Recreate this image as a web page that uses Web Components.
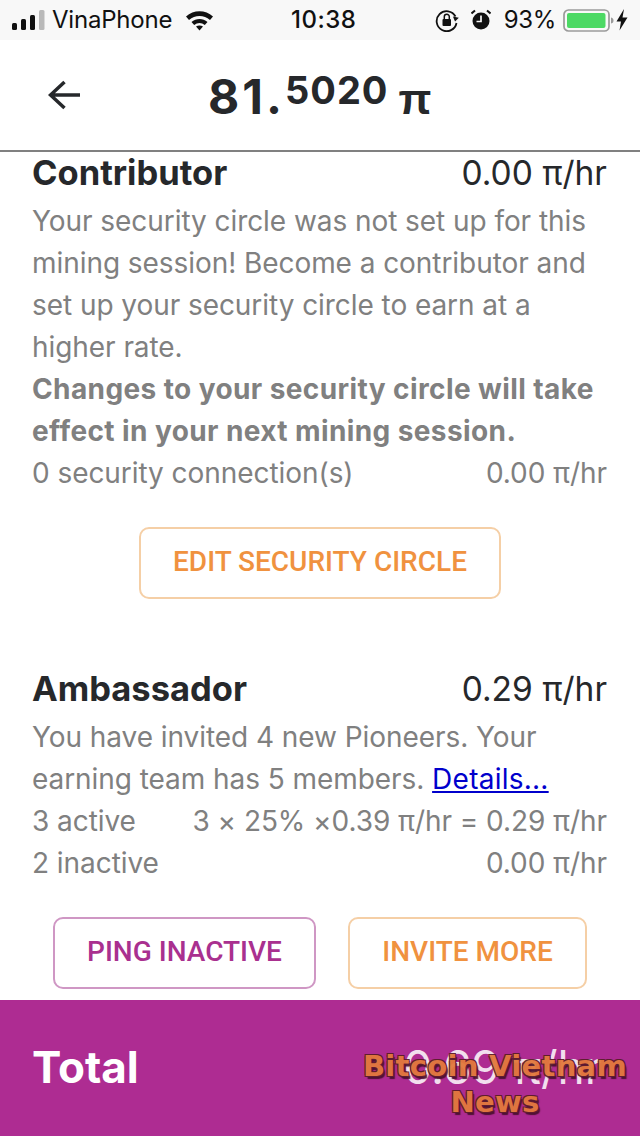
<!DOCTYPE html>
<html>
<head>
<meta charset="utf-8">
<style>
  html, body { margin: 0; padding: 0; background: #fff; }
  body { width: 640px; height: 1136px; overflow: hidden; font-family: Inter, Roboto, sans-serif; display: flex; flex-direction: column; position: relative; }
</style>
</head>
<body>
<status-bar></status-bar>
<balance-header></balance-header>
<main-scroll>
  <earning-section title="Contributor" rate="0.00 π/hr">
    <text-line>Your security circle was not set up for this</text-line>
    <text-line>mining session! Become a contributor and</text-line>
    <text-line>set up your security circle to earn at a</text-line>
    <text-line>higher rate.</text-line>
    <text-line bold>Changes to your security circle will take</text-line>
    <text-line bold>effect in your next mining session.</text-line>
    <text-line right="0.00 π/hr">0 security connection(s)</text-line>
    <button-row slot="actions">
      <action-button color="orange" width="362">EDIT SECURITY CIRCLE</action-button>
    </button-row>
  </earning-section>
  <earning-section title="Ambassador" rate="0.29 π/hr">
    <text-line>You have invited 4 new Pioneers. Your</text-line>
    <text-line>earning team has 5 members. <a href="#" style="color:#0000cc;letter-spacing:.25px">Details...</a></text-line>
    <text-line right="3 × 25% ×0.39 π/hr = 0.29 π/hr">3 active</text-line>
    <text-line right="0.00 π/hr">2 inactive</text-line>
    <button-row slot="actions">
      <action-button color="purple" width="263">PING INACTIVE</action-button>
      <action-button color="orange" width="239">INVITE MORE</action-button>
    </button-row>
  </earning-section>
</main-scroll>
<total-bar></total-bar>
<water-mark></water-mark>

<script>
  // barra de status do telefone
  class StatusBar extends HTMLElement {
    constructor() {
      super();
      this.attachShadow({ mode: 'open' });
      this.shadowRoot.innerHTML = `
        <style>
          :host { display: flex; flex: none; height: 40px; background: #f8f8f8; align-items: center; color: #111; font: 400 24px/40px Inter, Roboto, sans-serif; position: relative; }
          .left { display: flex; align-items: center; padding-left: 12px; }
          .name { margin-left: 7px; font-size: 24px; letter-spacing: -0.2px; }
          .wifi { margin-left: 13px; }
          .time { position: absolute; left: 291px; top: 0; font-weight: 500; font-size: 24px; letter-spacing: 0.5px; }
          .right { margin-left: auto; display: flex; align-items: center; padding-right: 12px; }
          .pct { font-size: 24px; margin: 0 7px 0 13px; letter-spacing: -0.3px; }
          svg { display: block; }
        </style>
        <div class="left">
          <svg width="33" height="22" viewBox="0 0 33 22">
            <rect x="0" y="14" width="5" height="7" rx="1.500" fill="#111"/>
            <rect x="9" y="10" width="5" height="11" rx="1.500" fill="#111"/>
            <rect x="18" y="6" width="5" height="15" rx="1.500" fill="#111"/>
            <rect x="27" y="1" width="5.500" height="20" rx="1.500" fill="#b9b9b9"/>
          </svg>
          <span class="name">VinaPhone</span>
          <svg class="wifi" width="29" height="22" viewBox="0 0 29 22">
            <path d="M1 7.500C8.500 0.500 20.500 0.500 28 7.500L25 11C19 5.500 10 5.500 4 11Z" fill="#111"/>
            <path d="M6.500 13C11 9 18 9 22.500 13L19.800 16C16.500 13.300 12.500 13.300 9.200 16Z" fill="#111"/>
            <path d="M11 17.500C13 16 16 16 18 17.500L14.500 21.500Z" fill="#111"/>
          </svg>
        </div>
        <span class="time">10:38</span>
        <div class="right">
          <svg width="24" height="24" viewBox="0 0 24 24" style="margin-right:12px">
            <path d="M20.500 8.500A10 10 0 1 0 21.500 15" fill="none" stroke="#111" stroke-width="1.800"/>
            <path d="M17.500 9L23.500 9L20.500 13.500Z" fill="#111" transform="rotate(10 20 11)"/>
            <rect x="7.500" y="11" width="8.500" height="7" rx="1" fill="#111"/>
            <path d="M9.300 11V8.800a2.500 2.500 0 0 1 5 0V11" fill="none" stroke="#111" stroke-width="1.500"/>
          </svg>
          <svg width="20" height="22" viewBox="0 0 20 22">
            <circle cx="10" cy="12" r="8.500" fill="#111"/>
            <path d="M10 6.500V12.500H5.500" fill="none" stroke="#f8f8f8" stroke-width="1.700"/>
            <path d="M0.500 4.500L4 1.500M19.500 4.500L16 1.500" stroke="#111" stroke-width="2"/>
          </svg>
          <span class="pct">93%</span>
          <svg width="52" height="24" viewBox="0 0 52 24">
            <rect x="1" y="2" width="45" height="21" rx="4.500" fill="none" stroke="#9a9a9a" stroke-width="1.700"/>
            <rect x="4" y="5" width="38.500" height="15" rx="2" fill="#4cd964"/>
            <path d="M48 9.500C50 10 50.500 11 50.500 12.500C50.500 14 50 15 48 15.500Z" fill="#9a9a9a"/>
          </svg>
          <svg width="12" height="22" viewBox="0 0 12 22" style="margin-left:1px">
            <path d="M8 0L0.500 12.500H5L3.500 21.500L11.500 8.500H6.500Z" fill="#111"/>
          </svg>
        </div>`;
    }
  }
  customElements.define('status-bar', StatusBar);

  // cabecalho com o saldo
  class BalanceHeader extends HTMLElement {
    constructor() {
      super();
      this.attachShadow({ mode: 'open' });
      this.shadowRoot.innerHTML = `
        <style>
          :host { display: flex; flex: none; height: 110px; border-bottom: 2px solid #808080; background: #fff; align-items: center; color: #26282b; }
          .back { margin-left: 48px; width: 33px; display: flex; }
          .title { margin-left: 127px; padding-top: 3px; font: 700 48px/1 Inter, sans-serif; display: flex; align-items: baseline; white-space: nowrap; letter-spacing: 3px; }
          .sup { font-size: 38px; position: relative; top: -10px; letter-spacing: 1px; }
          .pi { font: 700 43px/1 "Liberation Sans", sans-serif; margin-left: 10px; }
        </style>
        <div class="back">
          <svg width="33" height="30" viewBox="0 0 33 30"><path d="M16.500 2L2.500 15L16.500 28M3 15H32" fill="none" stroke="#26282b" stroke-width="3.500"/></svg>
        </div>
        <div class="title"><span>81.</span><span class="sup">5020</span><span class="pi">π</span></div>`;
    }
  }
  customElements.define('balance-header', BalanceHeader);

  // area de rolagem, corta o que passa da altura
  class MainScroll extends HTMLElement {
    constructor() {
      super();
      this.attachShadow({ mode: 'open' });
      this.shadowRoot.innerHTML = `
        <style>
          :host { display: flex; flex-direction: column; height: 848px; flex: none; overflow: hidden; gap: 69px; }
        </style>
        <slot></slot>`;
    }
  }
  customElements.define('main-scroll', MainScroll);

  class EarningSection extends HTMLElement {
    constructor() {
      super();
      this.attachShadow({ mode: 'open' });
      const title = this.getAttribute('title');
      const rate = this.getAttribute('rate');
      this.shadowRoot.innerHTML = `
        <style>
          :host { display: block; padding: 0 33px 0 32px; }
          .head { display: flex; justify-content: space-between; height: 42px; line-height: 42px; margin-bottom: 6px; color: #26282b; }
          .title { font-size: 34.5px; font-weight: 700; }
          .rate { font-size: 33.5px; }
          .actions { margin-top: 33px; }
        </style>
        <div class="head"><span class="title">${title}</span><span class="rate">${rate}</span></div>
        <slot></slot>
        <div class="actions"><slot name="actions"></slot></div>`;
    }
  }
  customElements.define('earning-section', EarningSection);

  class TextLine extends HTMLElement {
    constructor() {
      super();
      this.attachShadow({ mode: 'open' });
      const right = this.getAttribute('right');
      this.shadowRoot.innerHTML = `
        <style>
          :host { display: flex; justify-content: space-between; height: 42px; font-size: 28px; line-height: 42px; color: #808080; white-space: nowrap; letter-spacing: -0.06px; }
          :host([bold]) { font-weight: 700; letter-spacing: 0.4px; }
        </style>
        <span><slot></slot></span>${right ? `<span>${right}</span>` : ''}`;
    }
  }
  customElements.define('text-line', TextLine);

  class ButtonRow extends HTMLElement {
    constructor() {
      super();
      this.attachShadow({ mode: 'open' });
      this.shadowRoot.innerHTML = `
        <style>
          :host { display: flex; justify-content: center; gap: 32px; padding-left: 1px; }
        </style>
        <slot></slot>`;
    }
  }
  customElements.define('button-row', ButtonRow);

  class ActionButton extends HTMLElement {
    constructor() {
      super();
      this.attachShadow({ mode: 'open' });
      const purple = this.getAttribute('color') === 'purple';
      const main = purple ? '#a9308f' : '#f0923f';
      const edge = purple ? '#cf97c4' : '#f5cfa6';
      this.shadowRoot.innerHTML = `
        <style>
          :host { display: flex; box-sizing: border-box; width: ${this.getAttribute('width')}px; height: 72px; padding-bottom: 4px; border: 2px solid ${edge}; border-radius: 10px; align-items: center; justify-content: center; color: ${main}; font: 500 28px Roboto, sans-serif; background: #fff; white-space: nowrap; }
        </style>
        <slot></slot>`;
    }
  }
  customElements.define('action-button', ActionButton);

  class TotalBar extends HTMLElement {
    constructor() {
      super();
      this.attachShadow({ mode: 'open' });
      this.shadowRoot.innerHTML = `
        <style>
          :host { display: flex; flex: none; height: 136px; background: #ae2c92; color: #fff; align-items: center; justify-content: space-between; padding: 0 38px 3px 32px; box-sizing: border-box; }
          .t { font-size: 44px; font-weight: 700; }
          .v { font-size: 46px; opacity: .85; }
        </style>
        <span class="t">Total</span><span class="v">0.69 π/hr</span>`;
    }
  }
  customElements.define('total-bar', TotalBar);

  // marca d'agua por cima da barra
  class WaterMark extends HTMLElement {
    constructor() {
      super();
      this.attachShadow({ mode: 'open' });
      this.shadowRoot.innerHTML = `
        <style>
          :host { display: block; position: absolute; left: 362px; top: 1048px; width: 266px; text-align: center; font: 700 29px/36px "DejaVu Sans", sans-serif; color: #e2793c; letter-spacing: 0.300px; text-shadow: -1px -1px 0 #5b1c2a, 1px -1px 0 #5b1c2a, -1px 1px 0 #5b1c2a, 1px 1px 0 #5b1c2a, 2px 3px 1px #4b1030; opacity: .95; white-space: nowrap; }
        </style>
        <div>Bitcoin Vietnam</div><div>News</div>`;
    }
  }
  customElements.define('water-mark', WaterMark);
</script>
</body>
</html>
